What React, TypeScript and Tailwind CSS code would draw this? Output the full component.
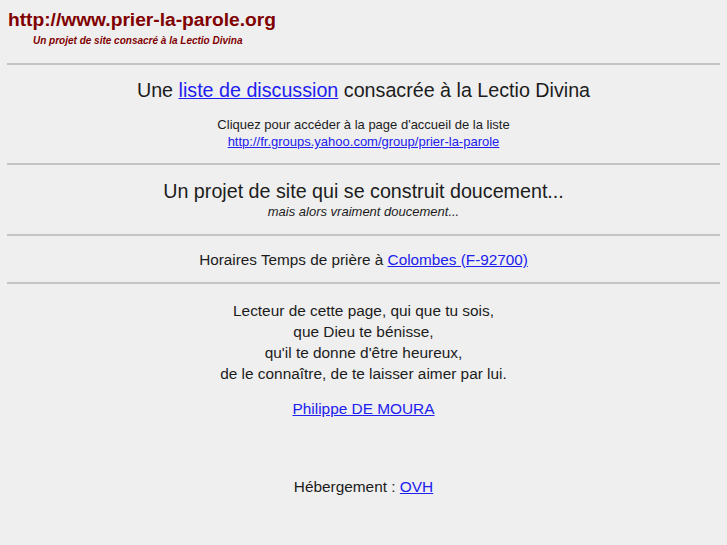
import React from "react";

const Rule = () => <hr className="my-0 border-0 border-t-2 border-[#c4c4c4]" />;

const Link = ({ children }: { children: React.ReactNode }) => (
  <a href="#" className="text-[#2020ee] underline">
    {children}
  </a>
);

export default function App() {
  return (
    <div className="min-h-[545px] bg-[#efefef] px-[7px] pt-[8px] pb-4 font-['Liberation_Sans',Arial,sans-serif] text-[#1c1c1c]">
      <div className="pl-px">
        <div className="text-[19.2px] font-bold leading-[24px] text-[#800000]">
          http://www.prier-la-parole.org
        </div>
        <div className="mt-[2px] pl-[25px] text-[10px] font-bold italic leading-[14px] text-[#800000]">
          Un projet de site consacré à la Lectio Divina
        </div>
      </div>

      <div className="mt-[15px]">
        <Rule />
      </div>

      <div className="pt-[12px] pb-[13px] text-center">
        <div className="text-[19.7px] leading-[26px]">
          Une <Link>liste de discussion</Link> consacrée à la Lectio Divina
        </div>
        <div className="mt-[13px] text-[13px] leading-[17px]">
          Cliquez pour accéder à la page d'accueil de la liste
          <br />
          <Link>http://fr.groups.yahoo.com/group/prier-la-parole</Link>
        </div>
      </div>

      <Rule />

      <div className="pt-[13px] pb-[14px] text-center">
        <div className="text-[19.7px] leading-[26px]">Un projet de site qui se construit doucement...</div>
        <div className="text-[13px] italic leading-[16px]">mais alors vraiment doucement...</div>
      </div>

      <Rule />

      <div className="pt-[14px] pb-[12px] text-center text-[15.3px] leading-[20px]">
        Horaires Temps de prière à <Link>Colombes (F-92700)</Link>
      </div>

      <Rule />

      <div className="pt-[16px] text-center text-[15.4px] leading-[21px]">
        <p>
          Lecteur de cette page, qui que tu sois,
          <br />
          que Dieu te bénisse,
          <br />
          qu'il te donne d'être heureux,
          <br />
          de le connaître, de te laisser aimer par lui.
        </p>
        <p className="mt-[14px]">
          <Link>Philippe DE MOURA</Link>
        </p>
        <p className="mt-[57px]">
          Hébergement : <Link>OVH</Link>
        </p>
      </div>
    </div>
  );
}
